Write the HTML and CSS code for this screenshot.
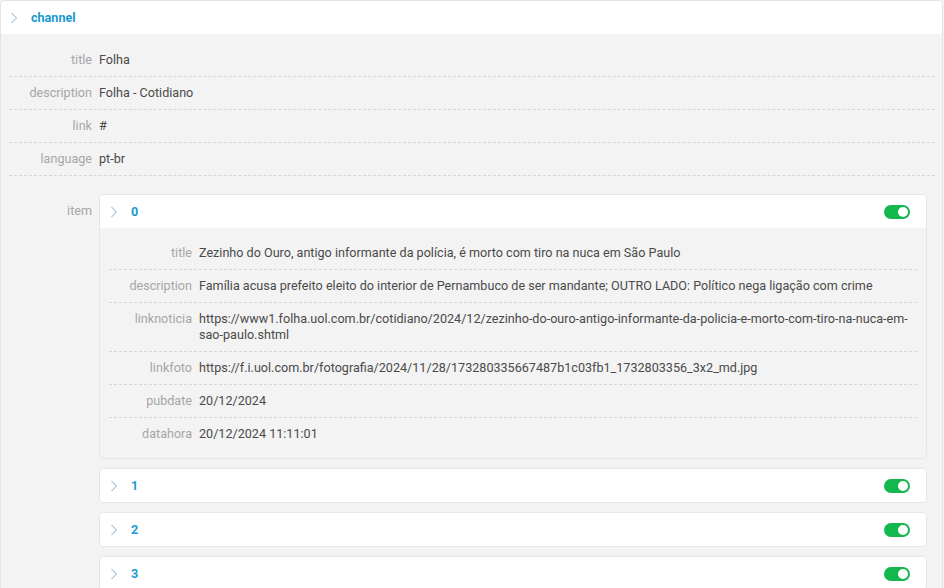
FILE: index.html
```html
<!DOCTYPE html>
<html>
<head>
<meta charset="utf-8">
<title>channel</title>
<link rel="stylesheet" href="styles.css">
</head>
<body>

<div class="node">
  <div class="node-head">
    <svg class="chev" width="8" height="12" viewBox="0 0 8 12"><path d="M1.5 1 L6.5 6 L1.5 11" fill="none" stroke="#7fa9c6" stroke-width="1"/></svg>
    <span class="node-name">channel</span>
  </div>
  <div class="node-body">
    <div class="row"><div class="key">title</div><div class="val">Folha</div></div>
    <div class="row"><div class="key">description</div><div class="val">Folha - Cotidiano</div></div>
    <div class="row"><div class="key">link</div><div class="val">#</div></div>
    <div class="row"><div class="key">language</div><div class="val">pt-br</div></div>
    <div class="row row-list">
      <div class="key">item</div>
      <div class="val list">

        <div class="node sub">
          <div class="node-head">
            <svg class="chev" width="8" height="12" viewBox="0 0 8 12"><path d="M1.5 1 L6.5 6 L1.5 11" fill="none" stroke="#7fa9c6" stroke-width="1"/></svg>
            <span class="node-name">0</span>
            <span class="toggle on"></span>
          </div>
          <div class="node-body">
            <div class="row"><div class="key">title</div><div class="val">Zezinho do Ouro, antigo informante da polícia, é morto com tiro na nuca em São Paulo</div></div>
            <div class="row"><div class="key">description</div><div class="val">Família acusa prefeito eleito do interior de Pernambuco de ser mandante; OUTRO LADO: Político nega ligação com crime</div></div>
            <div class="row"><div class="key">linknoticia</div><div class="val">https://www1.folha.uol.com.br/cotidiano/2024/12/zezinho-do-ouro-antigo-informante-da-policia-e-morto-com-tiro-na-nuca-em-sao-paulo.shtml</div></div>
            <div class="row"><div class="key">linkfoto</div><div class="val">https://f.i.uol.com.br/fotografia/2024/11/28/173280335667487b1c03fb1_1732803356_3x2_md.jpg</div></div>
            <div class="row"><div class="key">pubdate</div><div class="val">20/12/2024</div></div>
            <div class="row"><div class="key">datahora</div><div class="val">20/12/2024 11:11:01</div></div>
          </div>
        </div>

        <div class="node sub">
          <div class="node-head">
            <svg class="chev" width="8" height="12" viewBox="0 0 8 12"><path d="M1.5 1 L6.5 6 L1.5 11" fill="none" stroke="#7fa9c6" stroke-width="1"/></svg>
            <span class="node-name">1</span>
            <span class="toggle on"></span>
          </div>
        </div>

        <div class="node sub">
          <div class="node-head">
            <svg class="chev" width="8" height="12" viewBox="0 0 8 12"><path d="M1.5 1 L6.5 6 L1.5 11" fill="none" stroke="#7fa9c6" stroke-width="1"/></svg>
            <span class="node-name">2</span>
            <span class="toggle on"></span>
          </div>
        </div>

        <div class="node sub">
          <div class="node-head">
            <svg class="chev" width="8" height="12" viewBox="0 0 8 12"><path d="M1.5 1 L6.5 6 L1.5 11" fill="none" stroke="#7fa9c6" stroke-width="1"/></svg>
            <span class="node-name">3</span>
            <span class="toggle on"></span>
          </div>
        </div>

      </div>
    </div>
  </div>
</div>

</body>
</html>
```

FILE: styles.css
```css
body {
    margin: 0;
    background: #f3f3f3;
    font-family: Roboto, "Liberation Sans", sans-serif;
    font-size: 12.6px;
    color: #4a4a4a;
}

.node {
    width: 941px;
    border: 1px solid #e4e4e4;
    border-radius: 5px;
    background: #f3f3f3;
    overflow: hidden;
}

.node-head {
    display: flex;
    align-items: center;
    height: 33px;
    padding: 0 15px 0 9px;
    background: #fff;
}

.chev {
    flex: none;
    margin-right: 13px;
}

.node-name {
    font-weight: bold;
    color: #1a9ad0;
}

.node-body {
    padding: 10px 7px 10px 8px;
}

.row {
    display: flex;
    border-bottom: 1px dashed #d6d6d6;
    padding: 8px 0;
    line-height: 16px;
}

.key {
    flex: none;
    width: 83px;
    padding-right: 7px;
    text-align: right;
    color: #a6a6a6;
}

.val {
    flex: 1;
    min-width: 0;
    word-break: break-word;
}

.row-list {
    border-bottom: none;
    padding-top: 18px;
}

.row-list > .key {
    padding-top: 9px;
}

.list {
    display: flex;
    flex-direction: column;
    gap: 9px;
    padding-right: 8px;
}

.node.sub {
    width: auto;
    border-color: #e6e6e6;
}

.sub .node-head {
    padding: 0 16px 0 10px;
}

.sub .node-name {
    flex: 1;
}

.sub .node-body {
    padding: 9px 9px 8px 9px;
}

.sub .row:last-child {
    border-bottom: none;
}

.toggle {
    position: relative;
    width: 26px;
    height: 14px;
    border-radius: 7px;
    background: #e0e0e0;
}

.toggle.on {
    background: #12b84d;
}

.toggle::after {
    content: "";
    position: absolute;
    top: 2px;
    left: 2px;
    width: 10px;
    height: 10px;
    border-radius: 50%;
    background: #fff;
}

.toggle.on::after {
    left: 14px;
}
```
